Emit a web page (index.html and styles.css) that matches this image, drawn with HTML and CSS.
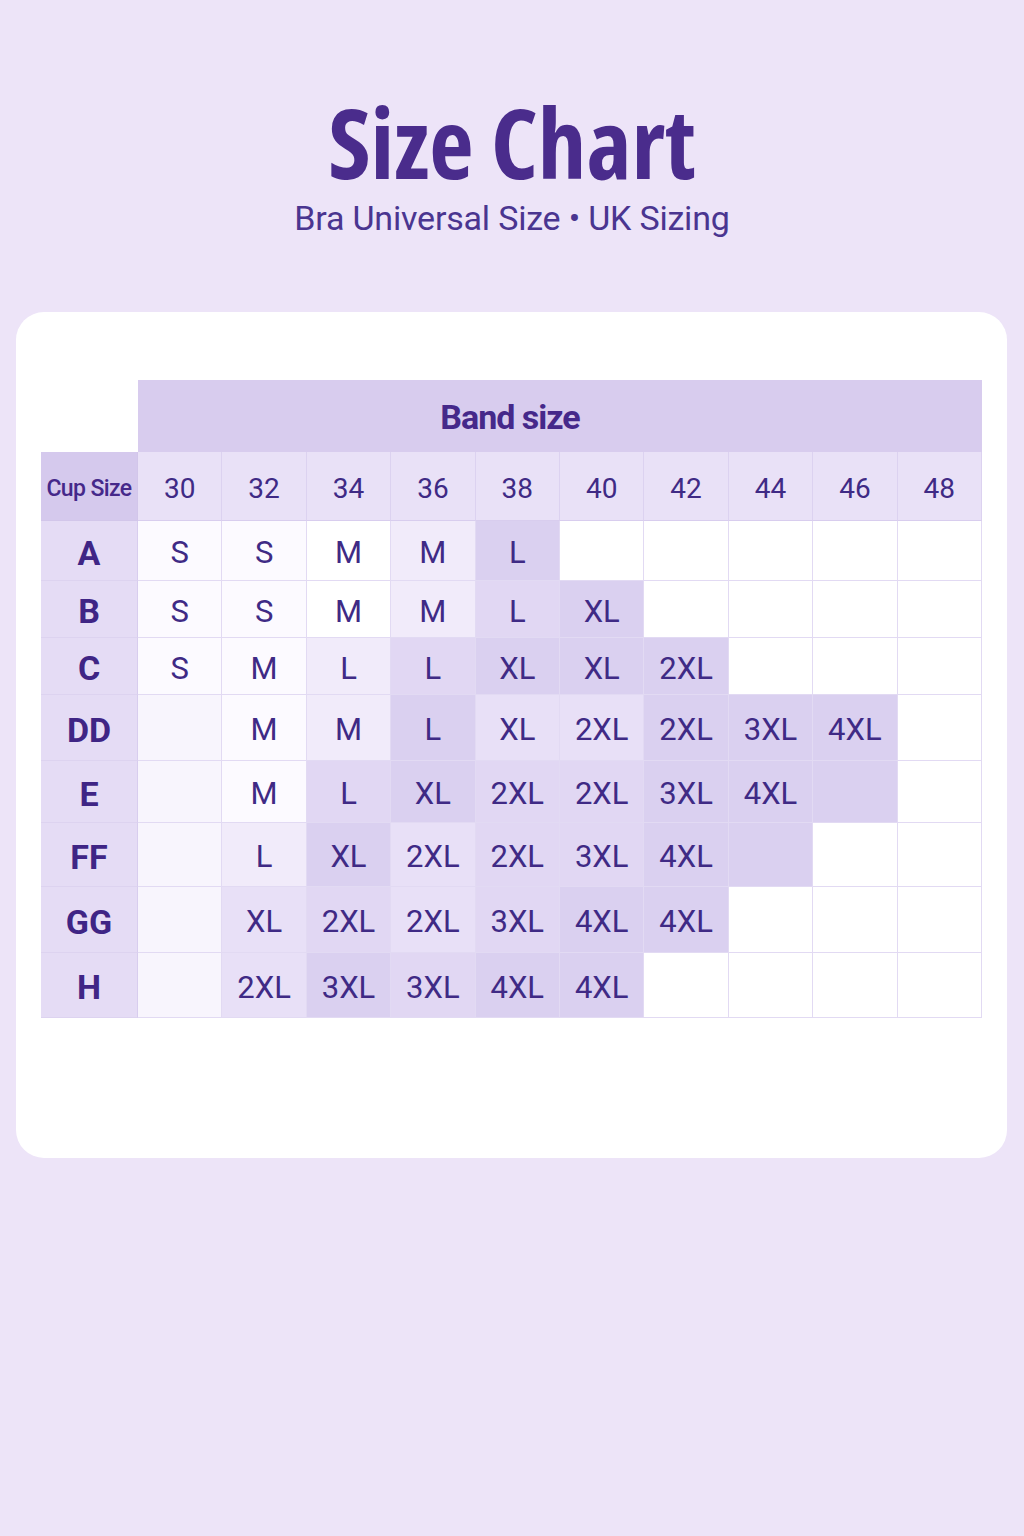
FILE: index.html
```html
<!DOCTYPE html>
<html lang="en">
<head>
<meta charset="utf-8">
<title>Size Chart</title>
<link rel="stylesheet" href="styles.css">
</head>
<body>
<header class="hero">
  <h1 class="title">Size Chart</h1>
  <p class="subtitle">Bra Universal Size • UK Sizing</p>
</header>
<main class="card">
  <div class="chart">
    <div class="corner"></div>
    <div class="band">Band size</div>

    <div class="cup-head">Cup Size</div>
    <div class="col-head">30</div><div class="col-head">32</div><div class="col-head">34</div><div class="col-head">36</div><div class="col-head">38</div><div class="col-head">40</div><div class="col-head">42</div><div class="col-head">44</div><div class="col-head">46</div><div class="col-head">48</div>

    <div class="row-head">A</div>
    <div class="cell s0">S</div><div class="cell s0">S</div><div class="cell sw">M</div><div class="cell s1">M</div><div class="cell s4">L</div><div class="cell sw"></div><div class="cell sw"></div><div class="cell sw"></div><div class="cell sw"></div><div class="cell sw"></div>

    <div class="row-head">B</div>
    <div class="cell s0">S</div><div class="cell s0">S</div><div class="cell sw">M</div><div class="cell s1">M</div><div class="cell s3">L</div><div class="cell s4">XL</div><div class="cell sw"></div><div class="cell sw"></div><div class="cell sw"></div><div class="cell sw"></div>

    <div class="row-head">C</div>
    <div class="cell s0">S</div><div class="cell s0">M</div><div class="cell s1">L</div><div class="cell s3">L</div><div class="cell s4">XL</div><div class="cell s4">XL</div><div class="cell s4">2XL</div><div class="cell sw"></div><div class="cell sw"></div><div class="cell sw"></div>

    <div class="row-head">DD</div>
    <div class="cell sf"></div><div class="cell s0">M</div><div class="cell s1">M</div><div class="cell s4">L</div><div class="cell s2">XL</div><div class="cell s2">2XL</div><div class="cell s4">2XL</div><div class="cell s4">3XL</div><div class="cell s4">4XL</div><div class="cell sw"></div>

    <div class="row-head">E</div>
    <div class="cell sf"></div><div class="cell s0">M</div><div class="cell s3">L</div><div class="cell s4">XL</div><div class="cell s3">2XL</div><div class="cell s3">2XL</div><div class="cell s4">3XL</div><div class="cell s4">4XL</div><div class="cell s4"></div><div class="cell sw"></div>

    <div class="row-head">FF</div>
    <div class="cell sf"></div><div class="cell s1">L</div><div class="cell s4">XL</div><div class="cell s2">2XL</div><div class="cell s3">2XL</div><div class="cell s3">3XL</div><div class="cell s4">4XL</div><div class="cell s4"></div><div class="cell sw"></div><div class="cell sw"></div>

    <div class="row-head">GG</div>
    <div class="cell sf"></div><div class="cell s2">XL</div><div class="cell s3">2XL</div><div class="cell s2">2XL</div><div class="cell s3">3XL</div><div class="cell s4">4XL</div><div class="cell s4">4XL</div><div class="cell sw"></div><div class="cell sw"></div><div class="cell sw"></div>

    <div class="row-head">H</div>
    <div class="cell sf"></div><div class="cell s2">2XL</div><div class="cell s4">3XL</div><div class="cell s3">3XL</div><div class="cell s4">4XL</div><div class="cell s4">4XL</div><div class="cell sw"></div><div class="cell sw"></div><div class="cell sw"></div><div class="cell sw"></div>
  </div>
</main>
</body>
</html>
```

FILE: styles.css
```css
html, body {
  margin: 0;
  padding: 0;
}

body {
  width: 1024px;
  min-height: 1536px;
  background: #ede4f8;
  font-family: "Roboto", "Liberation Sans", sans-serif;
  color: #3f2a85;
  overflow: hidden;
}

.hero {
  padding-top: 82px;
  height: 312px;
  box-sizing: border-box;
  text-align: center;
}

.title {
  margin: 0;
  font-family: "Open Sans", "Roboto", sans-serif;
  font-stretch: 75%;
  font-size: 97px;
  line-height: 118px;
  font-weight: 700;
  color: #4a2c8c;
}

.subtitle {
  margin: 1px 0 0;
  font-family: "Roboto", "Liberation Sans", sans-serif;
  font-size: 34px;
  line-height: 34px;
  letter-spacing: -0.2px;
  font-weight: 400;
  color: #4a3590;
}

.card {
  display: block;
  margin: 0 17px 0 16px;
  height: 846px;
  box-sizing: border-box;
  background: #ffffff;
  border-radius: 28px;
  padding: 68px 25px 0 25px;
}

.chart {
  display: grid;
  grid-template-columns: 97px repeat(10, 1fr);
  grid-template-rows: 72px 69px 60px 57px 57px 66px 62px 64px 66px 65px;
}

.chart > div {
  display: flex;
  align-items: center;
  justify-content: center;
  box-sizing: border-box;
  white-space: nowrap;
}

.corner {
  background: #ffffff;
}

.band {
  grid-column: span 10;
  background: #d8ccee;
  font-size: 34px;
  font-weight: 700;
  letter-spacing: -1px;
  color: #45288a;
  padding-top: 2px;
  padding-right: 100px;
}

.cup-head {
  background: #d5c9ed;
  font-size: 23px;
  font-weight: 500;
  letter-spacing: -0.6px;
  color: #45288a;
  border-right: 1px solid #d2c6ea;
  border-bottom: 1px solid #d2c6ea;
  padding-top: 4px;
}

.col-head {
  background: #e9e1f7;
  font-size: 28px;
  border-right: 1px solid #dcd2f0;
  border-bottom: 1px solid #d8cdee;
  padding-top: 4px;
}

.row-head {
  background: #e5dcf5;
  font-size: 34px;
  font-weight: 700;
  color: #3f2585;
  border-right: 1px solid #d8cdee;
  border-bottom: 1px solid #ddd3f0;
  padding-top: 4px;
}

.cell {
  font-size: 31px;
  border-right: 1px solid #e2daf3;
  border-bottom: 1px solid #e2daf3;
  padding-top: 4px;
}

.sw { background: #ffffff; }
.sf { background: #f8f5fd; }
.s0 { background: #fcfaff; }
.s1 { background: #f1ebfa; }
.s2 { background: #e8e0f7; }
.s3 { background: #e1d7f3; }
.s4 { background: #dad0f0; }
```
